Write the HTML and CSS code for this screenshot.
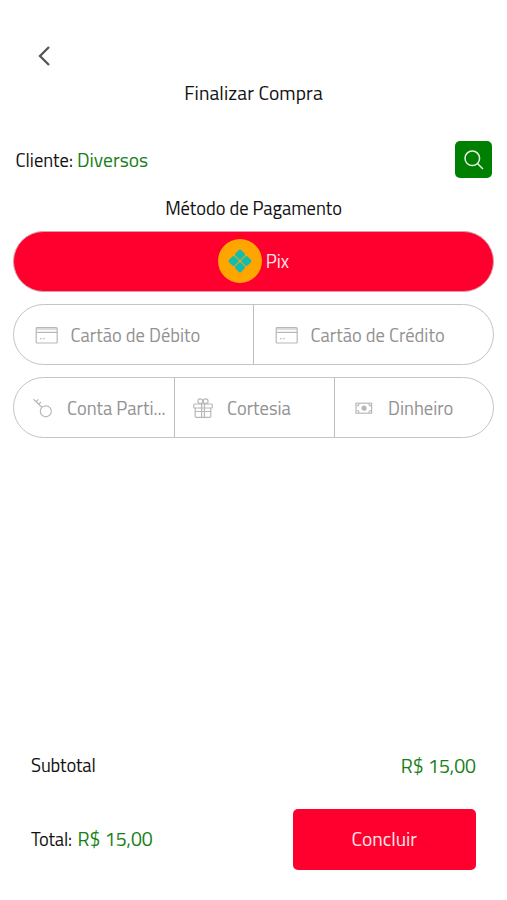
FILE: index.html
```
<!DOCTYPE html>
<html lang="pt-BR">
<head>
    <meta charset="UTF-8">
    <meta name="viewport" content="width=device-width, initial-scale=1.0">
    <title>Finalizar Compra</title>
    <link rel="stylesheet" href="styles.css">
</head>
<body>
    <div class="header">
        <a class="back" href="#" aria-label="Voltar">
            <svg width="14" height="22" viewBox="0 0 14 22"><path d="M12 2 L3 11 L12 20"/></svg>
        </a>
        <h1>Finalizar Compra</h1>
    </div>

    <div class="client">
        <div class="client-name"><span class="label">Cliente:</span><span class="value">Diversos</span></div>
        <button class="search" aria-label="Buscar">
            <svg width="20" height="20" viewBox="0 0 20 20"><circle cx="8.3" cy="8.3" r="7.3"/><path d="M13.5 13.5 L19 19"/></svg>
        </button>
    </div>

    <h2>Método de Pagamento</h2>

    <div class="methods">
        <button class="pix">
            <span class="pix-icon">
                <svg width="24" height="24" viewBox="0 0 24 24">
                    <g transform="rotate(45 12 12)">
                        <rect x="3.5" y="3.5" width="8" height="8" rx="1.6"/>
                        <rect x="12.5" y="3.5" width="8" height="8" rx="1.6"/>
                        <rect x="3.5" y="12.5" width="8" height="8" rx="1.6"/>
                        <rect x="12.5" y="12.5" width="8" height="8" rx="1.6"/>
                    </g>
                </svg>
            </span>
            <span class="pix-text">Pix</span>
        </button>

        <div class="row two">
            <button class="method">
                <svg class="icon" width="24" height="20" viewBox="0 0 24 20"><rect x="1.2" y="2.5" width="21" height="15.5" rx="1"/><path d="M1.2 4H22.2M1.2 7.3H22.2M5 13.7H6.5M8 13.7H9.5"/></svg>
                <span class="debit">Cartão de Débito</span>
            </button>
            <button class="method">
                <svg class="icon" width="24" height="20" viewBox="0 0 24 20"><rect x="1.2" y="2.5" width="21" height="15.5" rx="1"/><path d="M1.2 4H22.2M1.2 7.3H22.2M5 13.7H6.5M8 13.7H9.5"/></svg>
                <span class="credit">Cartão de Crédito</span>
            </button>
        </div>

        <div class="row three">
            <button class="method key">
                <svg class="icon" width="20" height="20" viewBox="0 0 20 20"><circle cx="12.8" cy="13.3" r="5.5"/><path d="M8.8 9.3L0.5 1.2M3 3.8L5.3 1.5M5.6 6.3L8 4"/></svg>
                <span class="account">Conta Parti...</span>
            </button>
            <button class="method gift">
                <svg class="icon" width="20" height="20" viewBox="0 0 20 20"><rect x="0.7" y="6" width="18.6" height="4" rx="1"/><path d="M2.2 10V18.3Q2.2 19.3 3.2 19.3H16.8Q17.8 19.3 17.8 18.3V10M8.6 6V19M11.4 6V19M2.2 13.5H17.8"/><circle cx="7.3" cy="3.2" r="2.4"/><circle cx="12.7" cy="3.2" r="2.4"/></svg>
                <span class="courtesy">Cortesia</span>
            </button>
            <button class="method money">
                <svg class="icon" width="18" height="14" viewBox="0 0 18 14"><rect x="1" y="2.2" width="15.6" height="10"/><path d="M2 4.8Q4 4.8 4 2.8M14 2.8Q14 4.8 16 4.8M2 9.5Q4 9.5 4 11.7M14 11.7Q14 9.5 16 9.5"/><circle class="coin" cx="9" cy="7.2" r="2"/></svg>
                <span class="cash">Dinheiro</span>
            </button>
        </div>
    </div>

    <div class="footer">
        <div class="subtotal">
            <span class="label">Subtotal</span>
            <span class="value">R$ 15,00</span>
        </div>
        <div class="total">
            <div><span class="label">Total:</span><span class="value">R$ 15,00</span></div>
            <button class="finish">Concluir</button>
        </div>
    </div>
</body>
</html>
```

FILE: styles.css
```
* {
    box-sizing: border-box;
}

body {
    margin: 0;
    height: 900px;
    display: flex;
    flex-direction: column;
    background-color: #fff;
    color: #111;
    font-family: "Titillium Web", Roboto, sans-serif;
    font-size: 18.5px;
    line-height: 24px;
    overflow: hidden;
}

button {
    padding: 0;
    border: none;
    font: inherit;
    cursor: pointer;
}

svg {
    display: block;
    flex: none;
    fill: none;
}

h1,
h2 {
    margin: 0;
    font-weight: 400;
    text-align: center;
}

h1 {
    font-size: 19.5px;
    letter-spacing: 0.1px;
}

h2 {
    margin-top: 18px;
    font-size: 18.5px;
    letter-spacing: -0.05px;
}

.header {
    padding-top: 45px;
}

.back {
    display: block;
    width: 14px;
    margin: 0 0 14px 36.5px;
}

.back svg {
    stroke: #555;
    stroke-width: 2.3;
}

.client {
    display: flex;
    justify-content: space-between;
    align-items: center;
    margin-top: 36px;
    padding: 0 15px 0 15.5px;
}

.client .label {
    display: inline-block;
    width: 61.5px;
}

.value {
    color: #168016; /* Green for names and amounts */
    font-size: 19.5px;
}

.search {
    width: 37px;
    height: 37px;
    display: flex;
    align-items: center;
    justify-content: center;
    border-radius: 5px;
    background-color: #008000;
}

.search svg {
    stroke: #e5f2e5;
    stroke-width: 1.5;
}

.methods {
    display: flex;
    flex-direction: column;
    gap: 12px;
    padding: 0 13px;
    margin-top: 11px;
}

.pix {
    height: 60.5px;
    display: flex;
    align-items: center;
    justify-content: center;
    gap: 4px;
    border: 1px solid #d9a0aa;
    border-radius: 31px;
    background-color: #ff002e;
    color: #ffe5ea;
}

.pix-icon {
    width: 44px;
    height: 44px;
    display: flex;
    align-items: center;
    justify-content: center;
    border-radius: 50%;
    background-color: #ffa500;
}

.pix-icon svg {
    fill: #14bcae;
}

.row {
    display: grid;
    height: 61px;
    border: 1px solid #c4c4c4;
    border-radius: 31px;
}

.two {
    grid-template-columns: 239px 1fr;
}

.three {
    grid-template-columns: 159.5px 160.5px 1fr;
}

.method {
    display: flex;
    align-items: center;
    gap: 12px;
    padding: 1px 0 0 20.5px;
    background: none;
    color: #929292;
    white-space: nowrap;
}

.method + .method {
    border-left: 1px solid #bdbdbd;
}

.key {
    gap: 14px;
    padding-left: 19px;
}

.gift {
    gap: 14px;
    padding-left: 18.5px;
}

.money {
    gap: 15px;
    padding-left: 20px;
}

.icon {
    stroke: #b8b8b8;
    stroke-width: 1.2;
}

.coin {
    fill: #b8b8b8;
}

.footer {
    margin-top: auto;
    padding: 0 31px 30.5px;
}

.subtotal,
.total {
    display: flex;
    justify-content: space-between;
    align-items: center;
}

.subtotal .label,
.total .label {
    font-size: 18.5px;
    letter-spacing: -0.15px;
}

.subtotal .label {
    padding-bottom: 2px;
}

.total {
    margin-top: 30px;
}

.total .label {
    display: inline-block;
    width: 46.5px;
}

.finish {
    width: 183.5px;
    height: 61px;
    border-radius: 5px;
    background-color: #ff002e;
    color: #ffe5ea;
    font-size: 19.5px;
}
```
